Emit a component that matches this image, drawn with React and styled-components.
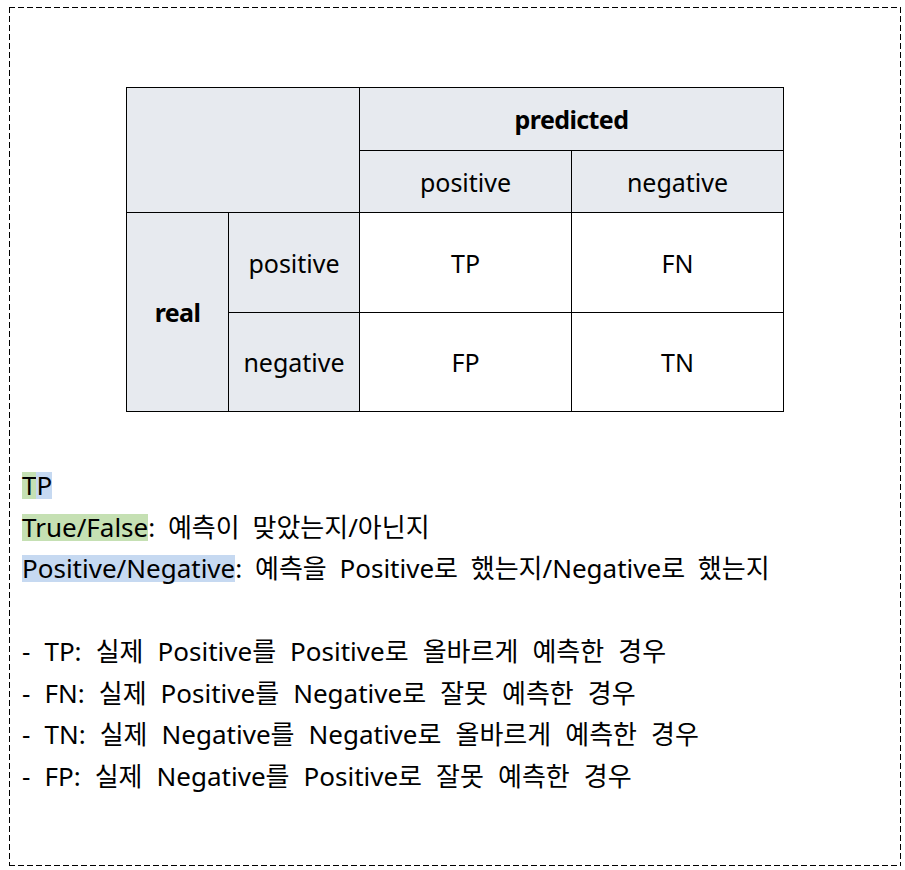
import React from 'react'
import styled, { createGlobalStyle } from 'styled-components'

const GlobalStyle = createGlobalStyle`
	body {
		margin: 0;
		background: #fff;
		font-family: "Noto Sans", "Noto Sans CJK KR", sans-serif;
		color: #000;
	}
`

const dashH = 'repeating-linear-gradient(90deg, #000 0 6px, transparent 6px 9px)'
const dashV = 'repeating-linear-gradient(180deg, #000 0 6px, transparent 6px 9px)'

// dashed frame drawn with gradients so the dashes come out longer than css "dashed"
const Page = styled.div`
	margin: 7px 4px 0 9px;
	height: 859px;
	box-sizing: border-box;
	padding: 1px 13px;
	background:
		${dashH} top left / 100% 1px no-repeat,
		${dashH} bottom left / 100% 1px no-repeat,
		${dashV} top left / 1px 100% no-repeat,
		${dashV} top right / 1px 100% no-repeat;
`

const Matrix = styled.table`
	border-collapse: collapse;
	margin: 79px auto 0;
	font-size: 25px;
	td {
		border: 1px solid #000;
		text-align: center;
		padding: 0;
	}
`

const HeadCell = styled.td`
	background: #e7eaef;
	font-weight: ${p => (p.$bold ? 700 : 400)};
	letter-spacing: ${p => (p.$bold ? '-0.6px' : '0')};
	width: ${p => p.$w}px;
	height: ${p => p.$h}px;
`

const ValueCell = styled.td`
	background: #fff;
	width: 211px;
`

const Notes = styled.div`
	margin-top: 53px;
	font-size: 26px;
	line-height: 41.5px;
`

const Line = styled.div`
	white-space: pre;
	word-spacing: ${p => p.$spread || 6}px;
`

const Mark = styled.span`
	display: inline-block;
	line-height: 27px;
	background: ${p => (p.$tone === 'green' ? '#c5e0b3' : '#c6d9f1')};
	word-spacing: 0;
`

const Gap = styled.div`
	height: 41.5px;
`

const cases = [
	'- TP: 실제 Positive를 Positive로 올바르게 예측한 경우',
	'- FN: 실제 Positive를 Negative로 잘못 예측한 경우',
	'- TN: 실제 Negative를 Negative로 올바르게 예측한 경우',
	'- FP: 실제 Negative를 Positive로 잘못 예측한 경우'
]

export default function App() {
	return (
		<>
			<GlobalStyle />
			<Page>
				<Matrix>
					<tbody>
						<tr>
							<HeadCell colSpan={2} rowSpan={2} />
							<HeadCell colSpan={2} $bold $h={62}>predicted</HeadCell>
						</tr>
						<tr>
							<HeadCell $w={211} $h={61}>positive</HeadCell>
							<HeadCell $w={211} $h={61}>negative</HeadCell>
						</tr>
						<tr>
							<HeadCell rowSpan={2} $bold $w={101}>real</HeadCell>
							<HeadCell $w={130} $h={99}>positive</HeadCell>
							<ValueCell>TP</ValueCell>
							<ValueCell>FN</ValueCell>
						</tr>
						<tr>
							<HeadCell $w={130} $h={98}>negative</HeadCell>
							<ValueCell>FP</ValueCell>
							<ValueCell>TN</ValueCell>
						</tr>
					</tbody>
				</Matrix>
				<Notes>
					<Line>
						<Mark $tone='green'>T</Mark><Mark $tone='blue'>P</Mark>
					</Line>
					<Line>
						<Mark $tone='green'>True/False</Mark>: 예측이 맞았는지/아닌지
					</Line>
					<Line>
						<Mark $tone='blue'>Positive/Negative</Mark>: 예측을 Positive로 했는지/Negative로 했는지
					</Line>
					<Gap />
					{cases.map(text => (
						<Line key={text} $spread={7.3}>{text}</Line>
					))}
				</Notes>
			</Page>
		</>
	)
}
